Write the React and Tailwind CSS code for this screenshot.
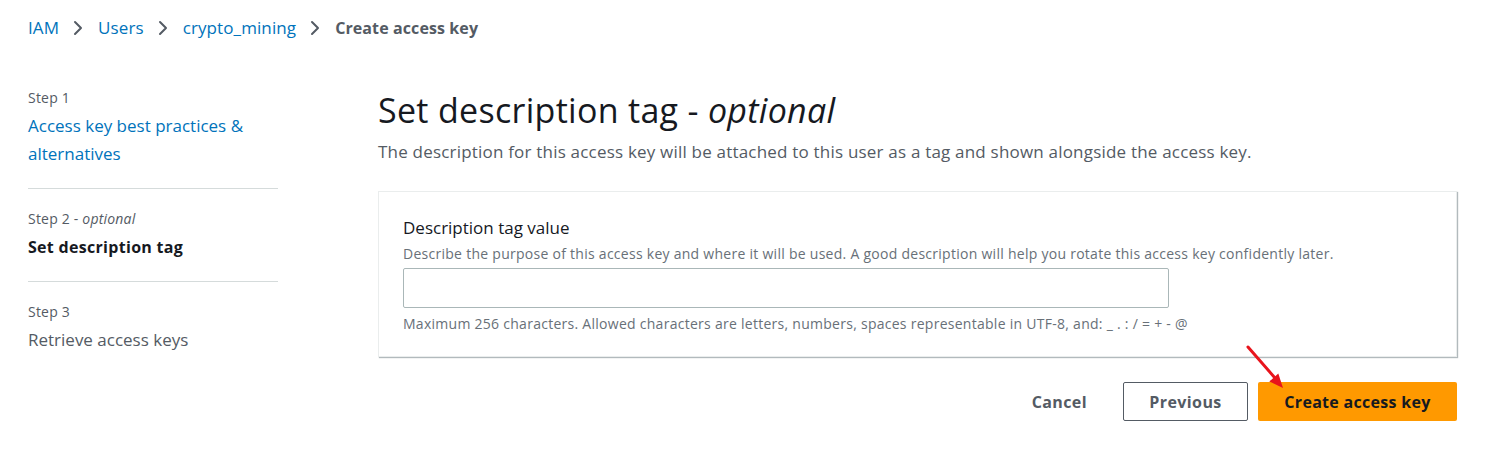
const font = { fontFamily: '"Open Sans", "Noto Sans", Arial, sans-serif' };

function Chevron() {
  return (
    <svg className="ml-[14px] mr-[15px]" width="10" height="16" viewBox="0 0 10 16" fill="none">
      <path d="M2 2 L8 8 L2 14" stroke="#545b64" strokeWidth="2" strokeLinecap="round" strokeLinejoin="round" />
    </svg>
  );
}

function Crumbs() {
  const links = ['IAM', 'Users', 'crypto_mining'];
  return (
    <nav className="flex items-center h-[56px] pl-[28px] text-[17px] tracking-[0.1px]">
      {links.map((l) => (
        <span key={l} className="flex items-center">
          <span className="text-[#0073bb]">{l}</span>
          <Chevron />
        </span>
      ))}
      <span className="font-bold text-[16px] text-[#545b64]">Create access key</span>
    </nav>
  );
}

function Steps() {
  return (
    <aside className="w-[250px] ml-[28px] mt-[30px] shrink-0">
      <div className="pb-[20px] border-b border-[#d5dbdb]">
        <div className="text-[14px] text-[#545b64] leading-[24px] tracking-[0.2px]">Step 1</div>
        <div className="text-[17px] text-[#0073bb] leading-[28px] mt-[2px]">Access key best practices &amp; alternatives</div>
      </div>
      <div className="pt-[18px] pb-[20px] border-b border-[#d5dbdb]">
        <div className="text-[14px] text-[#545b64] leading-[24px] tracking-[0.2px]">Step 2 - <i>optional</i></div>
        <div className="text-[16px] font-bold text-[#16191f] leading-[28px] mt-[2px] tracking-[0.3px]">Set description tag</div>
      </div>
      <div className="pt-[18px]">
        <div className="text-[14px] text-[#545b64] leading-[24px] tracking-[0.2px]">Step 3</div>
        <div className="text-[17px] text-[#545b64] leading-[28px] mt-[2px]">Retrieve access keys</div>
      </div>
    </aside>
  );
}

export default function App() {
  return (
    <div className="w-[1488px] h-[449px] bg-white relative overflow-hidden" style={font}>
      <Crumbs />
      <div className="flex">
        <Steps />
        <main className="ml-[100px] w-[1079px]">
          <h1 className="text-[34px] leading-[40px] text-[#16191f] mt-[34px] tracking-[0.3px]">
            Set description tag - <i>optional</i>
          </h1>
          <p className="text-[17px] text-[#545b64] leading-[24px] mt-[10px] tracking-[0.2px]">
            The description for this access key will be attached to this user as a tag and shown alongside the access key.
          </p>
          <section className="mt-[27px] border border-[#eaeded] shadow-[1px_1px_1px_0_rgba(0,28,36,0.3)] px-[24px] pt-[24px] pb-[22px]">
            <div className="text-[17px] text-[#16191f] leading-[24px] mb-[4px]">Description tag value</div>
            <div className="text-[14px] text-[#687078] leading-[20px] tracking-[0.27px]">
              Describe the purpose of this access key and where it will be used. A good description will help you rotate this access key confidently later.
            </div>
            <input className="block mt-[4px] w-[766px] h-[40px] border border-[#aab7b8] rounded-[2px] px-[10px] outline-none" />
            <div className="text-[14px] text-[#687078] leading-[20px] mt-[6px] tracking-[0.27px]">
              Maximum 256 characters. Allowed characters are letters, numbers, spaces representable in UTF-8, and: _ . : / = + - @
            </div>
          </section>
          <div className="flex justify-end items-center mt-[25px] gap-[10px]">
            <button className="text-[16px] font-bold text-[#545b64] px-[20px] h-[39px] mr-[6px] tracking-[0.4px]">Cancel</button>
            <button className="text-[16px] font-bold text-[#545b64] w-[125px] h-[39px] border border-[#545b64] rounded-[2px] tracking-[0.4px]">Previous</button>
            <button className="text-[16px] font-bold text-[#16191f] w-[199px] h-[39px] bg-[#ff9900] rounded-[2px] tracking-[0.3px]">Create access key</button>
          </div>
        </main>
      </div>
      <svg className="absolute left-[1244px] top-[343px]" width="50" height="50" viewBox="0 0 50 50">
        <line x1="4" y1="4" x2="31" y2="35" stroke="#e8141c" strokeWidth="3" strokeLinecap="round" />
        <polygon points="39,45 34.3,30.5 25.3,38.5" fill="#e8141c" />
      </svg>
    </div>
  );
}
